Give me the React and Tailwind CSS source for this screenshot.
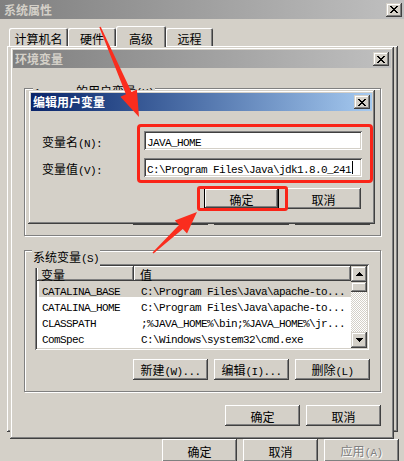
import React from "react";

const CJK_RE = /[\u2e80-\u9fff\uff00-\uffef]/;

function Txt({ text, className = "" }) {
  const parts = text.match(/[\u2e80-\u9fff\uff00-\uffef]+|[^\u2e80-\u9fff\uff00-\uffef]+/g) || [];
  return (
    <span className={"whitespace-pre leading-none " + className}>
      {parts.map((p, i) =>
        CJK_RE.test(p) ? (
          <span key={i} className="font-['Noto_Sans_CJK_SC',sans-serif] text-[12px]">
            {p}
          </span>
        ) : (
          <span key={i} className="font-['Liberation_Mono',monospace] text-[11px] tracking-[-0.6px]">
            {p}
          </span>
        )
      )}
    </span>
  );
}

const RAISED = "shadow-[inset_-1px_-1px_0_#404040,inset_1px_1px_0_#ffffff,inset_-2px_-2px_0_#808080]";
const WINDOW =
  "shadow-[inset_-1px_-1px_0_#404040,inset_1px_1px_0_#d4d0c8,inset_-2px_-2px_0_#808080,inset_2px_2px_0_#ffffff]";
const SUNKEN =
  "shadow-[inset_1px_1px_0_#808080,inset_-1px_-1px_0_#ffffff,inset_2px_2px_0_#404040,inset_-2px_-2px_0_#d4d0c8]";
const GROUP = "border border-[#808080] shadow-[inset_1px_1px_0_#ffffff,1px_1px_0_#ffffff]";

function PixelArt({ w, h, px }) {
  return (
    <svg width={w} height={h} viewBox={`0 0 ${w} ${h}`} shapeRendering="crispEdges">
      {px.map(([x, y, len = 1], i) => (
        <rect key={i} x={x} y={y} width={len} height="1" fill="#000" />
      ))}
    </svg>
  );
}

const X_PX = [
  [0, 0, 2], [6, 0, 2],
  [1, 1, 2], [5, 1, 2],
  [2, 2, 4],
  [3, 3, 2],
  [2, 4, 4],
  [1, 5, 2], [5, 5, 2],
  [0, 6, 2], [6, 6, 2],
];

function CloseBtn() {
  return (
    <div className={"w-[16px] h-[14px] bg-[#d4d0c8] flex items-center justify-center " + WINDOW}>
      <PixelArt w={8} h={7} px={X_PX} />
    </div>
  );
}

function TitleBar({ title, active }) {
  return (
    <div
      className={
        "h-[18px] shrink-0 flex items-center justify-between pl-[2px] pr-[2px] " +
        (active
          ? "bg-linear-to-r from-[#0a246a] to-[#a6caf0] text-white"
          : "bg-linear-to-r from-[#808080] to-[#c0c0c0] text-[#d4d0c8]")
      }
    >
      <span className="font-['Noto_Sans_CJK_SC',sans-serif] text-[12px] font-bold leading-none">{title}</span>
      <CloseBtn />
    </div>
  );
}

function Btn({ label, isDefault, disabled, tall }) {
  return (
    <div
      className={
        "w-[75px] shrink-0 bg-[#d4d0c8] flex items-center justify-center " +
        (tall ? "h-[23px] " : "h-[21px] ") +
        (isDefault ? "border border-black " + RAISED : RAISED) +
        (disabled ? " text-[#808080] [text-shadow:1px_1px_0_#ffffff]" : " text-black")
      }
    >
      <Txt text={label} />
    </div>
  );
}

function Tab({ label, selected, className }) {
  return (
    <div
      className={
        "bg-[#d4d0c8] rounded-t-[2px] flex justify-center shadow-[inset_1px_1px_0_#ffffff,inset_-1px_0_0_#404040,inset_-2px_0_0_#808080] " +
        (selected ? "h-[21px] -mb-[1px] items-start pt-[4px] " : "h-[18px] items-center pt-[1px] ") +
        className
      }
    >
      <Txt text={label} className="text-black" />
    </div>
  );
}

function Input({ text, caret }) {
  return (
    <div className={"w-[218px] h-[19px] bg-white flex items-center pl-[3px] text-black " + SUNKEN}>
      <Txt text={text} />
      {caret && <span className="w-[1px] h-[13px] bg-black ml-[1px]" />}
    </div>
  );
}

const UP_PX = [[3, 0, 1], [2, 1, 3], [1, 2, 5], [0, 3, 7]];
const DOWN_PX = [[0, 0, 7], [1, 1, 5], [2, 2, 3], [3, 3, 1]];

const ROWS = [
  ["CATALINA_BASE", "C:\\Program Files\\Java\\apache-to...", true],
  ["CATALINA_HOME", "C:\\Program Files\\Java\\apache-to...", false],
  ["CLASSPATH", ";%JAVA_HOME%\\bin;%JAVA_HOME%\\jr...", false],
  ["ComSpec", "C:\\Windows\\system32\\cmd.exe", false],
];

function ListView() {
  return (
    <div className={"ml-[10px] mt-[13px] w-[334px] h-[86px] p-[2px] bg-white flex " + SUNKEN}>
      <div className="flex-1 flex flex-col min-w-0 overflow-hidden">
        <div className="h-[15px] flex shrink-0">
          <div className={"w-[97px] h-full flex items-center pl-[4px] text-black bg-[#d4d0c8] " + RAISED}>
            <Txt text="变量" />
          </div>
          <div className={"flex-1 h-full flex items-center pl-[6px] text-black bg-[#d4d0c8] " + RAISED}>
            <Txt text="值" />
          </div>
        </div>
        {ROWS.map(([a, b, sel]) => (
          <div
            key={a}
            className={"h-[16px] ml-[2px] pl-[3px] flex items-center text-black " + (sel ? "bg-[#d4d0c8]" : "")}
          >
            <div className="w-[99px] shrink-0">
              <Txt text={a} />
            </div>
            <Txt text={b} />
          </div>
        ))}
      </div>
      <div className="w-[16px] flex flex-col">
        <div className={"h-[16px] bg-[#d4d0c8] flex items-center justify-center " + WINDOW}>
          <PixelArt w={7} h={4} px={UP_PX} />
        </div>
        <div className={"h-[10px] bg-[#d4d0c8] " + WINDOW} />
        <div className="flex-1 bg-[image:repeating-conic-gradient(#d4d0c8_0%_25%,#ffffff_0%_50%)] bg-[length:2px_2px]" />
        <div className={"h-[16px] bg-[#d4d0c8] flex items-center justify-center " + WINDOW}>
          <PixelArt w={7} h={4} px={DOWN_PX} />
        </div>
      </div>
    </div>
  );
}

export default function App() {
  return (
    <div className="relative w-[404px] h-[461px] overflow-hidden bg-[#d4d0c8] select-none">
      {/* Outer window: 系统属性 */}
      <div className="flex flex-col w-[404px]">
        <div className="h-[19px] flex items-center justify-between pl-[4px] pr-[2px] bg-linear-to-r from-[#808080] to-[#c0c0c0]">
          <span className="font-['Noto_Sans_CJK_SC',sans-serif] text-[12px] font-bold leading-none text-[#d4d0c8]">
            系统属性
          </span>
          <CloseBtn />
        </div>
        <div className="mt-[7px] ml-[9px] h-[20px] flex items-end relative z-10">
          <Tab label="计算机名" className="w-[59px]" />
          <Tab label="硬件" className="w-[48px]" />
          <Tab label="高级" selected className="w-[50px]" />
          <Tab label="远程" className="w-[47px]" />
        </div>
        <div className="ml-[7px] w-[391px] h-[386px] shadow-[inset_-1px_-1px_0_#404040,inset_1px_1px_0_#ffffff,inset_-2px_-2px_0_#808080]" />
        <div className="mt-[7px] pr-[5px] flex justify-end gap-[6px]">
          <Btn label="确定" tall />
          <Btn label="取消" tall />
          <Btn label="应用(A)" tall disabled />
        </div>
      </div>

      {/* Env window: 环境变量 */}
      <div className={"absolute left-[10px] top-[47px] w-[384px] h-[392px] p-[3px] bg-[#d4d0c8] flex flex-col z-20 " + WINDOW}>
        <TitleBar title="环境变量" />
        <div className="flex flex-col">
          <div className={"ml-[11px] mt-[20px] w-[357px] h-[148px] relative flex flex-col justify-end items-end pb-[10px] pr-[10px] " + GROUP}>
            <div className="absolute left-[8px] -top-[8px] h-[9px] overflow-hidden px-[1px] bg-[#d4d0c8] text-black flex items-start">
              <Txt text="1      的用户变量(U)" className="mt-[1px]" />
            </div>
            <div className="flex gap-[6px]">
              <Btn label="新建(N)..." />
              <Btn label="编辑(E)..." />
              <Btn label="删除(D)" />
            </div>
          </div>
          <div className={"ml-[11px] mt-[14px] w-[357px] h-[142px] relative flex flex-col " + GROUP}>
            <div className="absolute left-[7px] -top-[7px] px-[1px] bg-[#d4d0c8] text-black">
              <Txt text="系统变量(S)" />
            </div>
            <ListView />
            <div className="mt-[9px] flex justify-end gap-[6px] pr-[10px]">
              <Btn label="新建(W)..." />
              <Btn label="编辑(I)..." />
              <Btn label="删除(L)" />
            </div>
          </div>
          <div className="mt-[13px] flex justify-end gap-[6px] pr-[10px]">
            <Btn label="确定" />
            <Btn label="取消" />
          </div>
        </div>
      </div>

      {/* Edit dialog: 编辑用户变量 */}
      <div className={"absolute left-[28px] top-[90px] w-[347px] h-[134px] p-[3px] bg-[#d4d0c8] flex flex-col z-30 " + WINDOW}>
        <TitleBar title="编辑用户变量" active />
        <div className="pt-[20px] pl-[11px] flex flex-col">
          <div className="h-[19px] flex items-center">
            <div className="w-[102px] text-black">
              <Txt text="变量名(N):" />
            </div>
            <Input text="JAVA_HOME" />
          </div>
          <div className="mt-[8px] h-[19px] flex items-center">
            <div className="w-[102px] text-black">
              <Txt text="变量值(V):" />
            </div>
            <Input text={"C:\\Program Files\\Java\\jdk1.8.0_241"} caret />
          </div>
          <div className="mt-[11px] flex justify-end gap-[7px] pr-[11px]">
            <Btn label="确定" isDefault />
            <Btn label="取消" />
          </div>
        </div>
      </div>

      {/* Red annotations */}
      <div className="absolute left-[137px] top-[124px] w-[236px] h-[59px] border-[3px] border-[#fa2418] rounded-[4px] z-40" />
      <div className="absolute left-[197px] top-[186px] w-[91px] h-[25px] border-[3px] border-[#fa2418] rounded-[3px] z-40" />
      <svg className="absolute left-0 top-0 z-50 pointer-events-none" width="404" height="461" viewBox="0 0 404 461">
        <polygon
          fill="#fa2d1e"
          points="99.3,27.3 125.9,94.3 120.4,96.7 139,117 136.9,89.5 131.5,91.9 100.7,26.7"
        />
        <polygon
          fill="#fa2d1e"
          points="152.5,252.4 179,225 174.8,220.4 197,212 187,233.6 182.8,229 153.5,253.6"
        />
      </svg>
    </div>
  );
}
